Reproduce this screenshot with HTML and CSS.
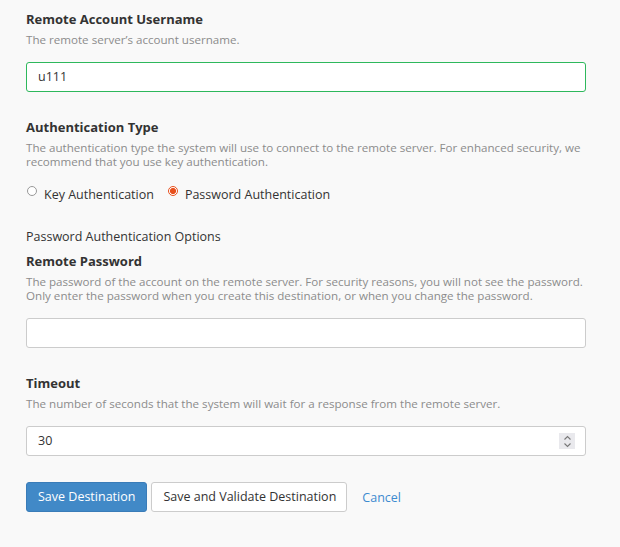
FILE: index.html
```html
<!DOCTYPE html>
<html>
<head>
<meta charset="utf-8">
<link rel="stylesheet" href="styles.css">
</head>
<body>
<form class="form">
  <div class="group">
    <div class="label">Remote Account Username</div>
    <div class="help">The remote server’s account username.</div>
    <div class="input input-valid">u111</div>
  </div>

  <div class="group">
    <div class="label">Authentication Type</div>
    <div class="help">The authentication type the system will use to connect to the remote server. For enhanced security, we recommend that you use key authentication.</div>
    <div class="radios">
      <label class="radio"><span class="dot"></span>Key Authentication</label>
      <label class="radio"><span class="dot dot-on"></span>Password Authentication</label>
    </div>
  </div>

  <div class="subhead">Password Authentication Options</div>
  <div class="group">
    <div class="label">Remote Password</div>
    <div class="help">The password of the account on the remote server. For security reasons, you will not see the password. Only enter the password when you create this destination, or when you change the password.</div>
    <div class="input"></div>
  </div>

  <div class="group">
    <div class="label">Timeout</div>
    <div class="help">The number of seconds that the system will wait for a response from the remote server.</div>
    <div class="input input-num">30
      <span class="spin"><svg width="9" height="13" viewBox="0 0 9 13"><path d="M1.5 4.5 L4.5 1.5 L7.5 4.5 M1.5 8.5 L4.5 11.5 L7.5 8.5" fill="none" stroke="#777" stroke-width="1.1"/></svg></span>
    </div>
  </div>

  <div class="actions">
    <span class="btn btn-primary">Save Destination</span>
    <span class="btn btn-default">Save and Validate Destination</span>
    <span class="link">Cancel</span>
  </div>
</form>
</body>
</html>
```
FILE: styles.css
```css
html, body {
  margin: 0;
  padding: 0;
  background: #f9f9f9;
}
body {
  font-family: "Open Sans", "Liberation Sans", sans-serif;
  color: #333;
  font-size: 12.5px;
}
.form {
  width: 560px;
  padding: 10px 0 0 26px;
}
.group {
  margin-bottom: 26px;
}
.label {
  font-weight: 700;
  font-size: 13px;
  line-height: 18px;
  margin-bottom: 5px;
}
.help {
  font-size: 11.6px;
  line-height: 14px;
  color: #8c8c8c;
  margin-right: -6px;
  margin-bottom: 15px;
}
.input {
  box-sizing: border-box;
  height: 30px;
  border: 1px solid #ccc;
  border-radius: 3px;
  background: #fff;
  padding: 0 11px;
  font-size: 12.5px;
  line-height: 28px;
  color: #333;
  position: relative;
}
.input-valid {
  border-color: #2eb85c;
}
.spin {
  position: absolute;
  right: 10px;
  top: 6px;
  width: 16px;
  height: 16px;
  background: #e9e9ed;
  display: flex;
  align-items: center;
  justify-content: center;
}
.spin svg { display: block; }
.radios {
  display: flex;
  gap: 13px;
  margin-top: 17px;
  line-height: 18px;
}
.radio {
  display: flex;
  align-items: flex-start;
  gap: 7px;
  font-size: 12.5px;
}
.dot {
  box-sizing: border-box;
  width: 10px;
  height: 10px;
  border-radius: 50%;
  border: 1px solid #999;
  background: #fff;
  margin-top: 0;
  margin-left: 1px;
}
.dot-on {
  border: 1px solid #e8501d;
  background: radial-gradient(circle, #e8501d 0 2.8px, #fff 3.2px 100%);
}
.subhead {
  font-size: 12.5px;
  line-height: 18px;
  margin-top: -2px;
  margin-bottom: 6px;
}
.actions {
  display: flex;
  align-items: center;
  gap: 4px;
}
.btn {
  box-sizing: border-box;
  height: 30px;
  line-height: 28px;
  padding: 0 11px;
  border-radius: 3px;
  font-size: 12.5px;
  border: 1px solid;
}
.btn-primary {
  background: #4189c7;
  border-color: #3a7cb8;
  color: #fff;
}
.btn-default {
  background: #fff;
  border-color: #ccc;
  color: #333;
  padding: 0 10px 0 11px;
}
.link {
  color: #3d8bd0;
  margin-left: 11px;
}
```
